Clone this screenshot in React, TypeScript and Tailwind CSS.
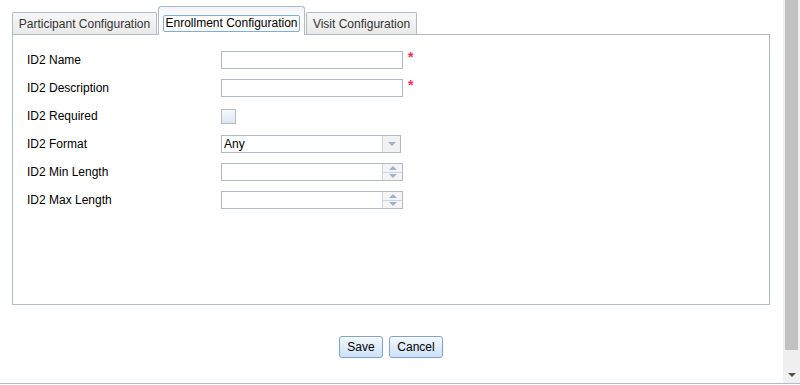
import React from "react"

const font = { fontFamily: '"Liberation Sans", Arial, sans-serif' }

function Tab({ label, active, width }: { label: string; active?: boolean; width: string }) {
  if (active) {
    return (
      <div
        className={`${width} h-[29px] -mb-px relative z-10 border border-b-0 border-[#b5b8c8] rounded-t-[3px] bg-gradient-to-b from-[#eef3fa] to-white to-[40%] flex items-start justify-center pt-[8px]`}
      >
        <span className="px-px h-[17px] leading-[15px] text-[12px] text-black border border-[#7eadd9] rounded-[2px]">
          {label}
        </span>
      </div>
    )
  }
  return (
    <div
      className={`${width} h-[22px] border border-b-0 border-[#b5b8c8] rounded-t-[2px] bg-gradient-to-b from-[#f7f7f7] to-[#e9e9e9] flex items-center justify-center text-[12px] text-[#333]`}
    >
      {label}
    </div>
  )
}

function Field({ label, children }: { label: string; children: React.ReactNode }) {
  return (
    <div className="flex items-center h-[18px]">
      <div className="w-[194px] text-[12px] text-black">{label}</div>
      {children}
    </div>
  )
}

function TextInput() {
  return (
    <div className="flex items-start">
      <div className="w-[182px] h-[18px] border border-[#b5b8c8] bg-white" />
      <span className="ml-[5px] -mt-px text-[14px] font-bold text-[#ff2a55] leading-none">*</span>
    </div>
  )
}

function Spinner() {
  return (
    <div className="flex w-[182px] h-[18px] border border-[#b5b8c8] bg-white">
      <div className="flex-1" />
      <div className="w-[20px] flex flex-col border-l border-[#d0d4de] bg-[#f4f4f4]">
        <div className="flex-1 flex items-center justify-center border-b border-[#d0d4de]">
          <svg width="8" height="4" viewBox="0 0 8 4"><path d="M0 4 L4 0 L8 4 Z" fill="#9fb3cf" /></svg>
        </div>
        <div className="flex-1 flex items-center justify-center">
          <svg width="8" height="4" viewBox="0 0 8 4"><path d="M0 0 L8 0 L4 4 Z" fill="#9fb3cf" /></svg>
        </div>
      </div>
    </div>
  )
}

export default function App() {
  return (
    <div className="w-[800px] h-[385px] bg-white flex flex-col overflow-hidden" style={font}>
      <div className="flex h-[383px]">
        <div className="flex-1 flex flex-col pt-[6px] pl-[12px] pr-[13px]">
          {/* Tabs */}
          <div className="flex items-end gap-px h-[28px]">
            <Tab label="Participant Configuration" width="w-[145px]" />
            <Tab label="Enrollment Configuration" width="w-[147px]" active />
            <Tab label="Visit Configuration" width="w-[111px]" />
          </div>

          {/* Panel */}
          <div className="h-[271px] border border-[#b5b8c8] bg-white pt-[16px] pl-[14px] flex flex-col gap-[10px]">
            <Field label="ID2 Name"><TextInput /></Field>
            <Field label="ID2 Description"><TextInput /></Field>
            <Field label="ID2 Required">
              <div className="w-[15px] h-[15px] border border-[#b5b8c8] bg-gradient-to-b from-[#f5f8fb] to-[#dde6f0]" />
            </Field>
            <Field label="ID2 Format">
              <div className="flex w-[180px] h-[18px] border border-[#b5b8c8] bg-white">
                <div className="flex-1 pl-[2px] text-[12px] leading-[16px] text-black">Any</div>
                <div className="w-[18px] border-l border-[#d0d4de] bg-[#f2f2f2] flex items-center justify-center">
                  <svg width="8" height="4" viewBox="0 0 8 4"><path d="M0 0 L8 0 L4 4 Z" fill="#9fb3cf" /></svg>
                </div>
              </div>
            </Field>
            <Field label="ID2 Min Length"><Spinner /></Field>
            <Field label="ID2 Max Length"><Spinner /></Field>
          </div>

          {/* Buttons */}
          <div className="flex justify-center gap-[6px] mt-[31px]">
            <button className="w-[44px] h-[22px] rounded-[3px] border border-[#7fa4cc] bg-gradient-to-b from-[#f3f8fe] to-[#cde0f6] text-[12px] text-black shadow-[inset_0_1px_0_#fff]">
              Save
            </button>
            <button className="w-[54px] h-[22px] rounded-[3px] border border-[#7fa4cc] bg-gradient-to-b from-[#f3f8fe] to-[#cde0f6] text-[12px] text-black shadow-[inset_0_1px_0_#fff]">
              Cancel
            </button>
          </div>
        </div>

        {/* Scrollbar */}
        <div className="w-[17px] bg-[#f0f0f0] flex flex-col items-center">
          <div className="w-[13px] h-[350px] bg-[#c1c1c1]" />
          <div className="flex-1 flex items-end pb-[6px]">
            <svg width="8" height="4" viewBox="0 0 8 4"><path d="M0 0 L8 0 L4 4 Z" fill="#505050" /></svg>
          </div>
        </div>
      </div>
      <div className="h-px bg-[#b5b8c8]" />
    </div>
  )
}
